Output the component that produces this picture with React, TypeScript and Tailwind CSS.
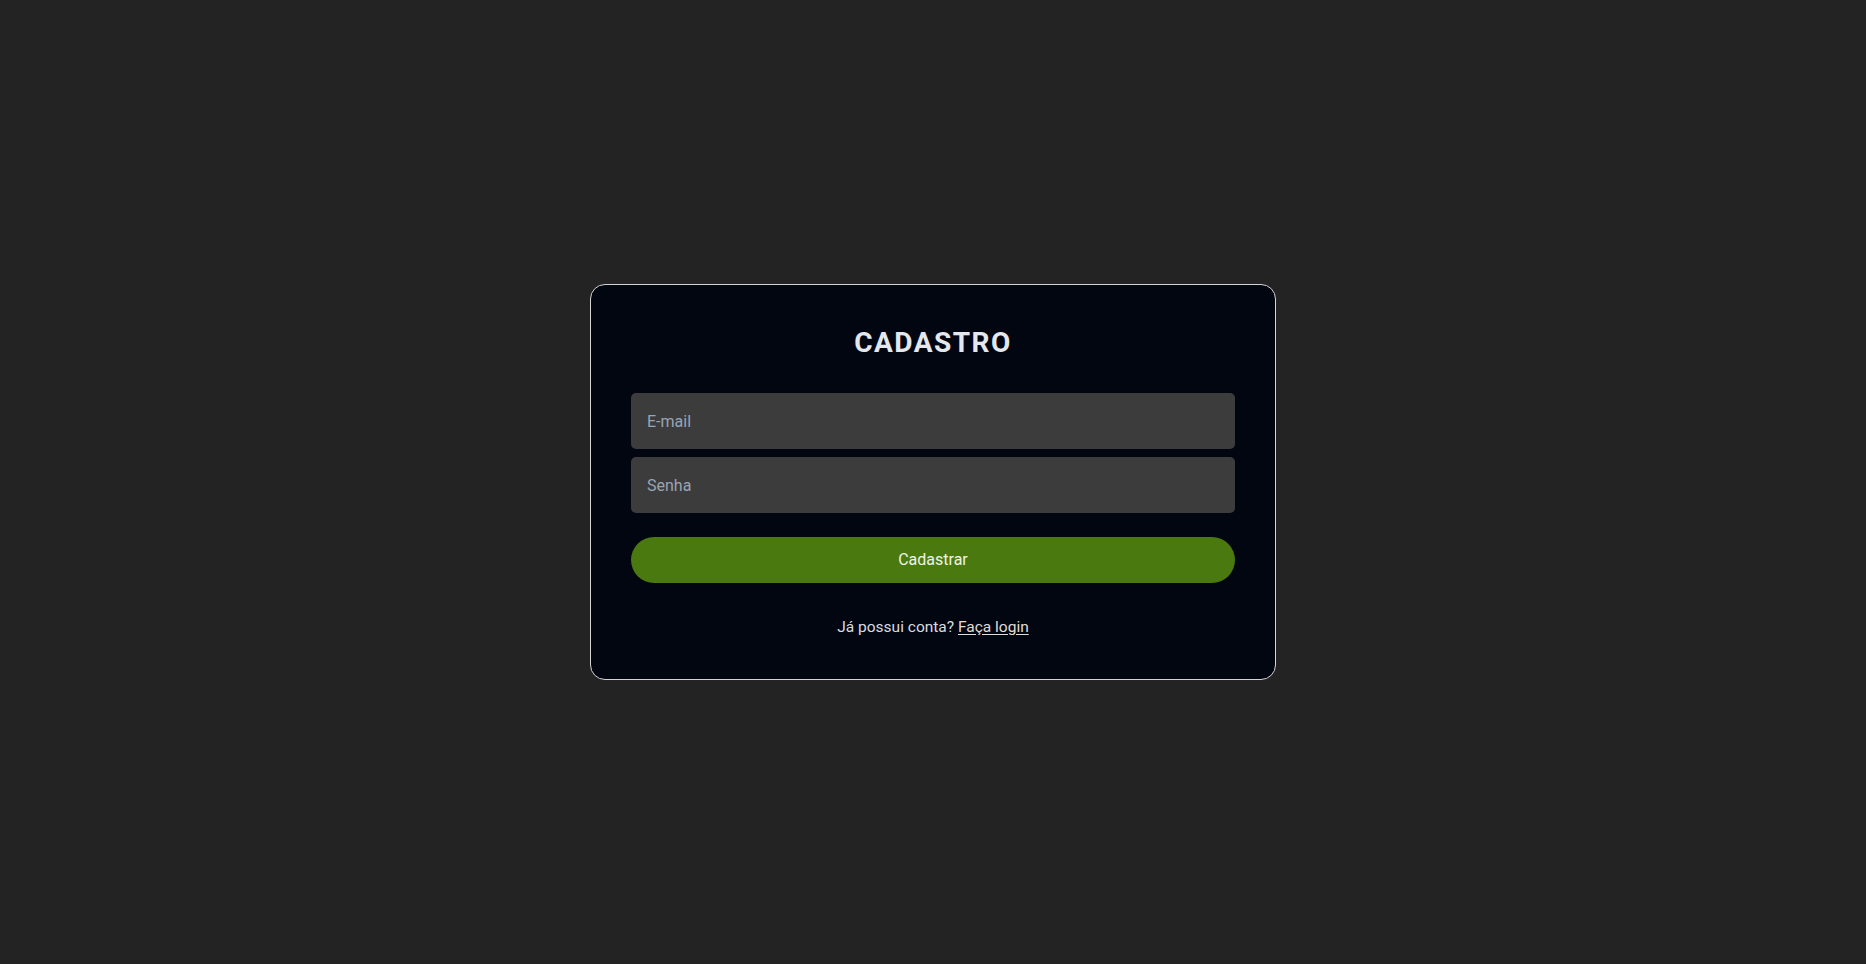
export default function App() {
  return (
    <div
      className="flex min-h-screen items-center justify-center bg-[#232323]"
      style={{ fontFamily: 'Roboto, "Noto Sans", sans-serif' }}
    >
      <form
        className="flex w-[686px] flex-col rounded-[15px] border border-[#d4d4d4] bg-[#020611] p-10"
        onSubmit={(e) => e.preventDefault()}
      >
        <h1 className="text-center text-[28px] leading-9 font-bold tracking-[1.5px] text-[#e4e8ee]">
          CADASTRO
        </h1>

        <div className="mt-8 flex flex-col gap-2">
          <input
            type="email"
            placeholder="E-mail"
            className="h-14 w-full rounded-[5px] bg-[#3c3c3c] px-4 text-base text-white outline-none placeholder:text-[#9aa4b4]"
          />
          <input
            type="password"
            placeholder="Senha"
            className="h-14 w-full rounded-[5px] bg-[#3c3c3c] px-4 text-base text-white outline-none placeholder:text-[#9aa4b4]"
          />
        </div>

        <button
          type="submit"
          className="mt-6 h-[46px] w-full rounded-full bg-[#4a7a0f] text-base text-[#eef3e6]"
        >
          Cadastrar
        </button>

        <p className="mt-8 text-center text-[15.5px] leading-6 text-[#d8dce2]">
          Já possui conta?{" "}
          <a href="#" className="text-[#e2dcd4] underline underline-offset-2">
            Faça login
          </a>
        </p>
      </form>
    </div>
  );
}
